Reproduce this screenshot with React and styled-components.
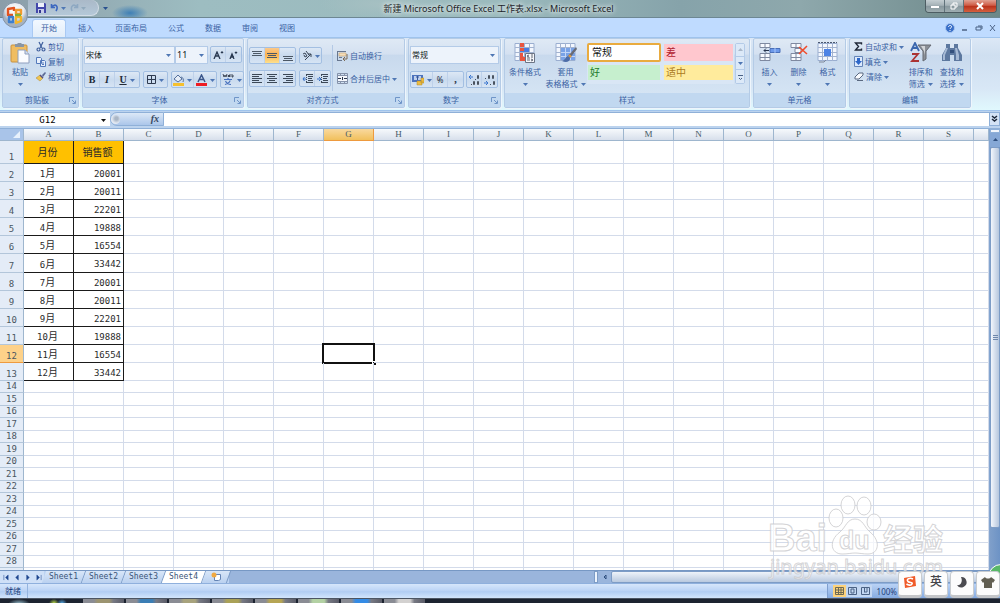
import * as React from 'react';
import styled, { createGlobalStyle } from 'styled-components';

const UI_FONT = '"Noto Sans", "Noto Sans CJK SC", sans-serif';
const CELL_FONT = '"DejaVu Sans Mono", "Noto Sans CJK SC", monospace';

const GlobalStyle = createGlobalStyle`
  *, *::before, *::after {
    box-sizing: border-box;
  }

  body {
    margin: 0;
    overflow: hidden;
    font: 8px/12px ${UI_FONT};
    color: #3a62a3;
  }

  button, select, input {
    margin: 0;
    padding: 0;
    border: 0;
    background: none;
    color: inherit;
    font: inherit;
  }

  svg {
    display: block;
    flex: none;
  }
`;

const Window = styled.div`
  position: relative;
  display: flex;
  flex-direction: column;
  height: 100vh;
  overflow: hidden;
  background: #bfdbff;
`;

/* Title bar */

const TitleBar = styled.header`
  display: grid;
  grid-template-columns: 1fr auto 1fr;
  flex: none;
  height: 18px;
  padding-right: 3px;
  border-bottom: 1px solid #6d8793;
  background:
    radial-gradient(ellipse 18px 8px at 130px 13px, #3f7fb5, transparent),
    radial-gradient(ellipse 60px 14px at 380px 4px, #a6c0c2, transparent),
    linear-gradient(90deg, #8b9da9, #9dbdc1 20%, #9bbabd 50%, #86a3aa 68%, #8ea8ac 80%, #6c8788);
`;

const OfficeButton = styled.button`
  position: absolute;
  top: 2px;
  left: 2px;
  z-index: 2;
  width: 26px;
  height: 26px;
  border-radius: 50%;
`;

const QuickAccess = styled.div`
  display: flex;
  align-items: center;
  gap: 4px;
  height: 16px;
  padding-left: 28px;
`;

const QuickPill = styled.div`
  display: flex;
  align-items: center;
  gap: 4px;
  width: 71px;
  height: 16px;
  padding-left: 8px;
  border: 1px solid #d3dde6;
  border-width: 0 1px 1px 0;
  border-radius: 0 8px 8px 0;
  background: linear-gradient(#aab9c8, #b4c8d8);
`;

const Title = styled.h1`
  margin: 0;
  font-size: 9px;
  font-weight: 400;
  line-height: 18px;
  color: #1c2428;
  text-shadow: 0 0 4px #ffffff, 0 0 6px #dfeaea;
`;

const WindowButtons = styled.div`
  display: flex;
  justify-self: end;
  height: 13px;
  border: 1px solid #4d5d63;
  border-top: 0;
  border-radius: 0 0 4px 4px;
  overflow: hidden;
`;

const WindowButton = styled.button`
  display: flex;
  align-items: center;
  justify-content: center;
  width: ${({ $close }) => ($close ? 32 : 19)}px;
  border-right: ${({ $close }) => ($close ? 0 : '1px solid #60727a')};
  background: ${({ $close }) => ($close
    ? 'linear-gradient(#e0a193, #cf5b45 45%, #b8301a 50%, #d5603f)'
    : 'linear-gradient(#c4ced2, #a5b2b7 45%, #87979d 50%, #9eadb1)')};
`;

/* Ribbon */

const TabRow = styled.nav`
  display: flex;
  flex: none;
  align-items: flex-end;
  height: 19px;
  padding-left: 32px;
`;

const RibbonTab = styled.button`
  height: 18px;
  margin-right: 3px;
  padding: 0 8px 2px;
  border: 1px solid ${({ $active }) => ($active ? '#a9c9f3' : 'transparent')};
  border-bottom: 0;
  border-radius: 3px 3px 0 0;
  background: ${({ $active }) => ($active ? 'linear-gradient(#f2f8ff, #e2edf9)' : 'none')};
  line-height: 15px;
`;

const TabTools = styled.div`
  display: flex;
  align-items: center;
  gap: 6px;
  height: 18px;
  margin-left: auto;
  padding-right: 3px;
`;

const PlainButton = styled.button`
  display: flex;
  align-items: center;
  gap: 2px;
`;

const Ribbon = styled.section`
  display: flex;
  flex: none;
  gap: 3px;
  height: 74px;
  padding: 0 2px 2px;
  border: 1px solid #9fc3ec;
  border-width: 1px 0;
  background: linear-gradient(#dce8f6, #cfdff0 24%, #d8e7f6 70%, #e0f8fd);
`;

const GroupBox = styled.section`
  display: flex;
  flex-direction: column;
  flex: none;
  width: ${({ $width }) => $width}px;
  border: 1px solid #b4cbe6;
  border-radius: 2px;
  background: linear-gradient(#dfe9f5, #d4e1f1 22%, #c8d9ed 24%, #d9e8f6);
  box-shadow: 1px 1px 0 #eef5fc;
`;

const GroupBody = styled.div`
  display: flex;
  flex: 1;
  min-height: 0;
  padding: 0 ${({ $pad = 1 }) => $pad}px;
`;

const GroupLabel = styled.footer`
  display: flex;
  align-items: center;
  flex: none;
  height: 14px;
  padding: 0 2px;
  background: #c1d8f0;

  span {
    flex: 1;
    text-align: center;
  }
`;

const Column = styled.div`
  display: flex;
  flex-direction: column;
  gap: ${({ $gap = 0 }) => $gap}px;
  padding-top: ${({ $top = 0 }) => $top}px;
`;

const Row = styled.div`
  display: flex;
  gap: ${({ $gap = 3 }) => $gap}px;
`;

const LargeButton = styled.button`
  display: flex;
  flex-direction: column;
  align-items: center;
  width: ${({ $width = 29 }) => $width}px;
  padding-top: 3px;
  line-height: 12px;
  white-space: nowrap;
`;

const IconSlot = styled.span`
  display: flex;
  align-items: flex-start;
  height: 24px;
`;

const ButtonLine = styled.span`
  display: flex;
  align-items: center;
  justify-content: center;
  gap: 3px;
  height: 12px;
`;

const SmallButton = styled.button`
  display: flex;
  align-items: center;
  gap: 2px;
  height: 15px;
  white-space: nowrap;
`;

const ToolSet = styled.div`
  display: flex;
  height: 17px;
  border: 1px solid #a3bfe2;
  border-radius: 2px;
  background: linear-gradient(#dde8f5, #c9daee 50%, #d6e4f4);
`;

const Tool = styled.button`
  display: flex;
  align-items: center;
  justify-content: center;
  gap: 3px;
  width: ${({ $width = 15 }) => $width}px;
  border-right: 1px solid #bed1ea;
  background: ${({ $active }) => ($active ? 'linear-gradient(#fbc98b, #fbb14f 45%, #fde08d)' : 'none')};
  color: #222b38;

  &:last-child {
    border-right: 0;
  }
`;

const Letter = styled.span`
  font: ${({ $italic }) => ($italic ? 'italic' : 'normal')} bold 10px/12px "Liberation Serif", serif;
  text-decoration: ${({ $underline }) => ($underline ? 'underline' : 'none')};
`;

const Combo = styled.label`
  display: flex;
  align-items: center;
  width: ${({ $width }) => $width}px;
  height: 18px;
  padding: 0 3px 0 1px;
  border: 1px solid #b4cbe8;
  background: #edf3fb;

  select {
    flex: 1;
    min-width: 0;
    appearance: none;
    outline: 0;
    color: #101820;
    font-size: ${({ $fontSize = 8 }) => $fontSize}px;
  }
`;

const Divider = styled.i`
  width: 1px;
  height: 46px;
  margin: 6px 4px 0 1px;
  background: #b3c9e5;
`;

const Gallery = styled.div`
  display: grid;
  grid-template-columns: 74px 71px;
  grid-template-rows: 19px 17px;
  gap: 2px;
  height: 41px;
  margin-top: 4px;
  background: #d9e6f5;
`;

const StyleSwatch = styled.button`
  margin: ${({ $selected }) => ($selected ? 0 : '1px')};
  padding-left: ${({ $selected }) => ($selected ? 3 : 2)}px;
  border: ${({ $selected }) => ($selected ? '2px solid #e9ab3f' : 0)};
  border-radius: ${({ $selected }) => ($selected ? 2 : 0)}px;
  background: ${({ $fill }) => $fill};
  color: ${({ $ink }) => $ink};
  font-size: 10px;
  line-height: 13px;
  text-align: left;
`;

const GalleryScroll = styled.div`
  display: grid;
  grid-template-rows: repeat(3, 1fr);
  width: 10px;
  height: 41px;
  margin: 4px 0 0 1px;
  border: 1px solid #b4cbe8;
  border-radius: 2px;

  button {
    display: flex;
    align-items: center;
    justify-content: center;
    border-bottom: 1px solid #b4cbe8;
    background: #dce9f8;
  }

  button:last-child {
    border-bottom: 0;
  }
`;

/* Formula bar */

const FormulaBar = styled.div`
  display: flex;
  flex: none;
  height: 18px;
  padding: 1px 0 2px;
  border-bottom: 1px solid #8fb0d8;
  background: #bcd3ee;
`;

const NameBox = styled.label`
  display: flex;
  align-items: center;
  width: 110px;
  padding-right: 4px;
  border-top: 1px solid #8fb0d8;
  background: #ffffff;
  color: #000000;

  input {
    flex: 1;
    min-width: 0;
    padding-right: 6px;
    outline: 0;
    font: 9px/12px ${CELL_FONT};
    text-align: center;
  }
`;

const FunctionArea = styled.div`
  display: flex;
  align-items: center;
  justify-content: space-between;
  width: 54px;
  padding-right: 4px;
  border: 1px solid #8fb0d8;
  border-radius: 8px 0 0 8px;
  background: linear-gradient(#dce8f7, #abc6ea);
  color: #36475e;
`;

const Knob = styled.i`
  width: 9px;
  height: 9px;
  border-radius: 50%;
  background: radial-gradient(circle at 60% 40%, #a9b6c6 20%, #e3e9f2 60%);
`;

const FunctionButton = styled.button`
  font: italic bold 10px/12px "Liberation Serif", serif;
`;

const FormulaInput = styled.input`
  flex: 1;
  min-width: 0;
  border-top: 1px solid #8fb0d8;
  background: #ffffff;
  outline: 0;
`;

const ExpandButton = styled.button`
  display: flex;
  align-items: center;
  justify-content: center;
  width: 11px;
  border: 1px solid #8fb0d8;
  background: #d4e3f5;
`;

/* Worksheet */

const Workspace = styled.main`
  display: flex;
  flex: 1;
  min-height: 0;
  background: #ffffff;
`;

const SheetArea = styled.div`
  flex: 1;
  min-width: 0;
  overflow: hidden;
`;

const Sheet = styled.table`
  width: 100%;
  table-layout: fixed;
  border-collapse: separate;
  border-spacing: 0;
  font: 9px/11px ${CELL_FONT};
  color: #2a2a2a;
`;

const RowNumberCol = styled.col`
  width: 24px;
`;

const DataCol = styled.col`
  width: 50px;
`;

const ColumnHead = styled.th`
  height: 12px;
  padding: 0;
  border-right: 1px solid ${({ $active }) => ($active ? '#ee9a3e' : '#9eb6ce')};
  border-bottom: 1px solid ${({ $active }) => ($active ? '#ee9a3e' : '#9eb6ce')};
  background: ${({ $active }) => ($active
    ? 'linear-gradient(#f9d99f, #f1c05c)'
    : 'linear-gradient(#f6f9fc, #d7dfeb)')};
  color: #465a66;
  font-family: "Liberation Serif", serif;
  font-weight: 400;
`;

const Corner = styled.th`
  padding: 0;
  border-right: 1px solid #9eb6ce;
  border-bottom: 1px solid #9eb6ce;
  background: #a9c4e9;

  svg {
    margin-left: auto;
    margin-right: 3px;
  }
`;

const SheetRow = styled.tr`
  height: ${({ $height }) => $height}px;
`;

const RowHead = styled.th`
  padding: 0;
  border-right: 1px solid #9eb6ce;
  border-bottom: 1px solid ${({ $active }) => ($active ? '#ee9a3e' : '#b3c6da')};
  background: ${({ $active }) => ($active ? '#fdd189' : '#e4ecf7')};
  color: #4a5661;
  font-weight: 400;
  vertical-align: bottom;
`;

const Cell = styled.td`
  position: relative;
  padding: ${({ $padTop }) => ($padTop ? 3 : 0)}px 2px 0 0;
  border-right: 1px solid ${({ $filled }) => ($filled ? '#1a1a1a' : '#d3dbea')};
  border-bottom: 1px solid ${({ $filled }) => ($filled ? '#1a1a1a' : '#d3dbea')};
  background: ${({ $heading }) => ($heading ? '#ffc000' : 'none')};
  font-size: ${({ $heading }) => ($heading ? 10 : 9)}px;
  text-align: ${({ $align = 'left' }) => $align};
`;

const Month = styled.span`
  font-size: 10px;
`;

const Selection = styled.span`
  position: absolute;
  inset: -2px;
  border: 2px solid #111111;

  &::after {
    content: '';
    position: absolute;
    right: -3px;
    bottom: -3px;
    width: 4px;
    height: 4px;
    border: 1px solid #ffffff;
    border-width: 1px 0 0 1px;
    background: #111111;
  }
`;

const VerticalScroll = styled.div`
  display: flex;
  flex-direction: column;
  align-items: stretch;
  width: 11px;
  padding-bottom: 42px;
  border-left: 1px solid #84a5d0;
  background: linear-gradient(90deg, #7f9fca, #6d93c5);
`;

const SplitBox = styled.i`
  height: 4px;
  border: 1px solid #8fb0d8;
  background: #f2f7fd;
`;

const ScrollArrow = styled.button`
  display: flex;
  align-items: center;
  justify-content: center;
  height: 14px;
  background: #86a8d6;
`;

const VerticalThumb = styled.div`
  display: flex;
  flex: 1;
  align-items: center;
  justify-content: center;
  border: 1px solid #7d9cc6;
  border-radius: 2px;
  background: linear-gradient(90deg, #f3f6fc, #b6c6dd);
`;

const SheetBar = styled.footer`
  display: flex;
  flex: none;
  height: 13px;
  border-top: 1px solid #7798c4;
  background: #9ab5dc;
`;

const SheetNav = styled.div`
  display: flex;
  align-items: center;
  justify-content: space-around;
  width: 44px;
  background: #cfe0f7;
`;

const SheetTabs = styled.div`
  display: flex;
  background: #bcd3f2;
`;

const SheetTab = styled.button`
  width: ${({ $width = 40 }) => $width}px;
  border-right: 1px solid #7d9cc6;
  background: ${({ $active }) => ($active ? '#ffffff' : 'linear-gradient(#d8e6f8, #bad1f0)')};
  color: #3b5578;
  font: 8px/12px ${CELL_FONT};
  transform: skewX(-20deg);
  white-space: nowrap;

  span {
    display: block;
    transform: skewX(20deg);
  }

  svg {
    margin: 0 auto;
    transform: skewX(20deg);
  }
`;

const HorizontalScroll = styled.div`
  display: flex;
  width: 406px;
  margin-left: auto;
`;

const HorizontalThumb = styled.div`
  flex: 1;
  margin-right: 20px;
  border: 1px solid #7d9cc6;
  border-radius: 2px;
  background: linear-gradient(#eef3fa, #b9c9df);
`;

const Splitter = styled.i`
  width: 4px;
  margin-right: 3px;
  border: 1px solid #7d9cc6;
  background: #edf4fd;
`;

const StatusBar = styled.footer`
  display: flex;
  flex: none;
  height: 15px;
  border-top: 1px solid #8fb0dd;
  background: linear-gradient(#d6e6fb, #bdd5f6 45%, #b1cdf3 55%, #d2e5fc);
  color: #1f427c;
  line-height: 13px;
`;

const StatusText = styled.span`
  padding: 0 6px 0 5px;
  border-right: 1px solid #94b4df;
`;

const ViewArea = styled.div`
  display: flex;
  align-items: center;
  gap: 5px;
  margin-left: auto;
  padding: 0 103px 0 5px;
  border-left: 1px solid #7f9fcf;
  background: linear-gradient(#b9d2f5, #86abe0);
`;

const ViewButtons = styled.div`
  display: flex;
  height: 12px;
  background: #c3d7f2;

  button {
    display: flex;
    align-items: center;
    justify-content: center;
    width: 13px;
  }

  button:first-child {
    background: #fcd27c;
  }
`;

const TaskBar = styled.footer`
  display: flex;
  flex: none;
  gap: 2px;
  height: 5px;
  padding-left: 83px;
  border-top: 1px solid #4c5563;
  background:
    radial-gradient(ellipse 11px 5px at 19px 5px, #9fc6d4, transparent),
    radial-gradient(ellipse 5px 4px at 54px 4px, #b4d64a, transparent),
    radial-gradient(ellipse 5px 4px at 62px 4px, #54a4dd, transparent),
    #1c2330;
`;

const TaskButton = styled.button`
  width: 41px;
  background: linear-gradient(90deg, #8a8c94, #8a8c94 26%, ${({ $tint }) => $tint} 36%, ${({ $tint }) => $tint} 64%, #777983 74%, #5a5c68);
`;

/* Floating layers */

const Watermark = styled.svg`
  position: absolute;
  right: 50px;
  bottom: 20px;
  pointer-events: none;
`;

const GreenBall = styled.i`
  position: absolute;
  right: -14px;
  bottom: 13px;
  width: 26px;
  height: 26px;
  border: 1px solid #ffffff;
  border-radius: 50%;
  background: #59b868;
`;

const InputMethod = styled.div`
  position: absolute;
  right: 0;
  bottom: 5px;
  display: flex;
  gap: 2px;
`;

const InputKey = styled.button`
  display: flex;
  align-items: center;
  justify-content: center;
  width: 24px;
  height: 27px;
  padding-bottom: 3px;
  border: 1px solid #c8ccd0;
  border-bottom: 3px solid #c3c5c8;
  border-radius: 4px;
  background: #fcfcfc;
  color: #44444a;
  font-size: 12px;
  font-weight: 500;
`;

const Arrow = ({ up = false, color = '#4f77b4' }) => (
  <svg width="5" height="4" viewBox="0 0 5 4" aria-hidden="true">
    <path d={up ? 'M0 3h5L2.500 0z' : 'M0 1h5L2.500 4z'} fill={color} />
  </svg>
);

const Launcher = () => (
  <svg width="7" height="7" viewBox="0 0 7 7" fill="none" stroke="#6f95c8">
    <path d="M.5 5V.5H5M3 3l3 3M6.500 3.500v3h-3" />
  </svg>
);

// eslint-disable-next-line react/prop-types
const Group = ({ title, width, launcher, children, pad }) => (
  <GroupBox $width={width}>
    <GroupBody $pad={pad}>{children}</GroupBody>
    <GroupLabel>
      <span>{title}</span>
      {launcher && <PlainButton aria-label={`${title}设置`}><Launcher /></PlainButton>}
    </GroupLabel>
  </GroupBox>
);

// eslint-disable-next-line react/prop-types
const BigTool = ({ icon, first, second, width }) => (
  <LargeButton $width={width}>
    <IconSlot>{icon}</IconSlot>
    <ButtonLine>{first}</ButtonLine>
    <ButtonLine>{second}<Arrow /></ButtonLine>
  </LargeButton>
);

const OfficeLogo = () => (
  <svg width="26" height="26" viewBox="0 0 26 26">
    <defs>
      <radialGradient id="orb" cx=".5" cy=".3">
        <stop offset="0" stopColor="#ffffff" />
        <stop offset=".7" stopColor="#e5e9ee" />
        <stop offset="1" stopColor="#a4b1c1" />
      </radialGradient>
    </defs>
    <circle cx="13" cy="13" r="12.500" fill="url(#orb)" stroke="#8292a5" />
    <g fill="none" strokeWidth="2.400" strokeLinejoin="round">
      <path d="M11 13H6V7l6-1v3" stroke="#e2531f" />
      <path d="M14 8h5v4h-5z" stroke="#f29a2e" />
      <path d="M7 15h4v5H7z" stroke="#3d7fd0" />
      <path d="M14 15h5v4l-5 2z" stroke="#f3b62c" />
      <path d="M13 13h6" stroke="#7eb33d" />
    </g>
  </svg>
);

const SaveIcon = () => (
  <svg width="10" height="10" viewBox="0 0 10 10">
    <path d="M0 0h9l1 1v9H0z" fill="#4348ab" />
    <path d="M2 0h6v4H2z" fill="#eef1fb" />
    <path d="M2 6h6v4H2z" fill="#c8cdea" />
    <path d="M3 7h2v3H3z" fill="#33388f" />
  </svg>
);

const UndoIcon = ({ redo = false }) => (
  <svg width="9" height="9" viewBox="0 0 9 9" fill="none" stroke={redo ? '#8ea8c2' : '#3d68c0'} strokeWidth="1.600">
    <path d={redo ? 'M7.500 1v3.500H4M7 4C4 0 0 3 2 8' : 'M1.500 1v3.500H5M2 4c3-4 7-1 4 4'} />
  </svg>
);

const PasteIcon = () => (
  <svg width="20" height="22" viewBox="0 0 20 22">
    <rect x="1" y="3" width="16" height="17" rx="1" fill="#f0bd62" stroke="#c9923f" />
    <path d="M5 5V2h2l1-1h3l1 1h2v3z" fill="#8996a5" />
    <path d="M8 8h7l4 4v9H8z" fill="#fbfcff" stroke="#8f9fbe" />
    <path d="M15 8v4h4" fill="#d5dfef" stroke="#8f9fbe" />
  </svg>
);

const CutIcon = () => (
  <svg width="10" height="11" viewBox="0 0 10 11" fill="none" stroke="#3f5f9d" strokeWidth="1.200">
    <path d="M3 1l3 6M7 1L4 7" />
    <circle cx="2.500" cy="8.500" r="1.500" />
    <circle cx="7.500" cy="8.500" r="1.500" />
  </svg>
);

const CopyIcon = () => (
  <svg width="10" height="11" viewBox="0 0 10 11" fill="#e7effb" stroke="#5379bb">
    <path d="M.5 1.500h4l1 1v5h-5zM4.500 4.500h4l1 1v5h-5z" />
    <path d="M6 7h2M6 8.500h2" />
  </svg>
);

const BrushIcon = () => (
  <svg width="10" height="10" viewBox="0 0 10 10">
    <path d="M6 3l3-3 1 1-3 4z" fill="#5c6a95" />
    <path d="M4 3l3 3-3 3-4-3z" fill="#efc550" stroke="#b08837" strokeWidth=".5" />
    <path d="M4 3l3 3" stroke="#534e82" strokeWidth="1.500" />
  </svg>
);

const BorderIcon = () => (
  <svg width="9" height="9" viewBox="0 0 9 9" fill="none" stroke="#2f3b50">
    <path d="M.5.5h8v8h-8zM.5 4.500h8M4.500.5v8" />
  </svg>
);

const FillIcon = () => (
  <svg width="11" height="12" viewBox="0 0 11 12">
    <path d="M1 5l4-4 4 4-4 3z" fill="#e6edf7" stroke="#56719c" />
    <path d="M8 3c2 0 3 3 2 5" fill="none" stroke="#56719c" />
    <path d="M0 9h11v3H0z" fill="#f5c02f" />
  </svg>
);

const FontColorIcon = () => (
  <svg width="11" height="12" viewBox="0 0 11 12">
    <path d="M2 8l3.500-7L9 8M3.500 5.500h4" fill="none" stroke="#3b568a" strokeWidth="1.500" />
    <path d="M0 9h11v3H0z" fill="#ee1c24" />
  </svg>
);

const PhoneticIcon = () => (
  <svg width="12" height="13" viewBox="0 0 12 13" fill="none">
    <path d="M1 1l1 3 1-2 1 2 1-3M8 1v3M8 3.500H6v-1h2M10 1v3h1V2" stroke="#333c4c" strokeWidth=".9" />
    <path d="M2 6.500h8M6 5v1.500M3 11.500c3-1 5-2 5-4M3.500 8c1 2 3 3.500 5.500 3.500" stroke="#456fbd" strokeWidth="1.200" />
  </svg>
);

const VAlignIcon = ({ y }) => (
  <svg width="10" height="12" viewBox="0 0 10 12" stroke="#4c5866">
    <path d={`M0 ${y + 0.5}h10M1 ${y + 2.5}h8M0 ${y + 4.5}h10`} />
  </svg>
);

const ALIGN_PATHS = {
  left: 'M0 1.500h10M0 3.500h7M0 5.500h10M0 7.500h7M0 9.500h10',
  center: 'M0 1.500h10M2 3.500h6M0 5.500h10M2 7.500h6M0 9.500h10',
  right: 'M0 1.500h10M3 3.500h7M0 5.500h10M3 7.500h7M0 9.500h10',
};

const AlignIcon = ({ side }) => (
  <svg width="10" height="11" viewBox="0 0 10 11" stroke="#3c4857">
    <path d={ALIGN_PATHS[side]} />
  </svg>
);

const IndentIcon = ({ out = false }) => (
  <svg width="11" height="10" viewBox="0 0 11 10" fill="none">
    <path d="M4 .5h7M6 2.500h5M6 4.500h4M6 6.500h5M4 8.500h7" stroke="#3c4857" />
    <path d="M4.500 1v8" stroke="#3c4857" strokeDasharray="1 1" />
    <path d={out ? 'M4 5H1M2.500 3L1 5l1.500 2' : 'M0 5h3M2 3l2 2-2 2'} stroke="#3a73c8" />
  </svg>
);

const OrientationIcon = () => (
  <svg width="10" height="10" viewBox="0 0 10 10" fill="none" stroke="#3b4657">
    <path d="M3 9l6-6M6 3h3v3" />
    <path d="M1 3l2-1 2 3-2 1-1-2M4 0l3 4" />
  </svg>
);

const WrapIcon = () => (
  <svg width="11" height="12" viewBox="0 0 11 12" fill="none">
    <path d="M.5 1v10M0 1.500h9M2 7.500h3M0 10.500h5" stroke="#68778f" />
    <path d="M2 3h7v3H2z" fill="#f5dfbd" stroke="#c79d66" strokeWidth=".6" />
    <path d="M10 4v5H6M8 7L6 9l2 2" stroke="#7d6a55" />
  </svg>
);

const MergeIcon = () => (
  <svg width="11" height="11" viewBox="0 0 11 11" fill="none">
    <path d="M.5.5h10v10H.5zM3.500 0v3M7.500 0v3M3.500 8v3M7.500 8v3M0 2.500h11M0 8.500h11" stroke="#8592aa" />
    <path d="M1 3h9v5H1z" fill="#f5f8fd" />
    <path d="M1 5.500h3M10 5.500H7M5.500 4v3" stroke="#27344b" />
  </svg>
);

const CurrencyIcon = () => (
  <svg width="12" height="12" viewBox="0 0 12 12">
    <path d="M0 1h11v7H0z" fill="#4d73bd" />
    <path d="M2 2h7v4H2z" fill="#bfd0ed" />
    <path d="M4 3h3M5.500 2v4" stroke="#35569b" />
    <path d="M5 7h5v4H5zM9 4h3v5H9z" fill="#edbd42" stroke="#b38a2b" strokeWidth=".5" />
  </svg>
);

// eslint-disable-next-line react/prop-types
const DecimalIcon = ({ more = false }) => (
  <svg width="12" height="12" viewBox="0 0 12 12" fill="none">
    <path d={more ? 'M5 3H1M3 1L1 3l2 2' : 'M0 9h4M2 7l2 2-2 2'} stroke="#3b76cf" />
    <path d={more ? 'M7 5.500h1M9.500 1.500h1v3h-1zM3 10.500h1M5.500 7.500h1v3h-1zM9.500 7.500h1v3h-1z' : 'M1 4.500h1M4.500 1.500h1v3h-1zM8.500 1.500h1v3h-1zM6 10.500h1M9.500 7.500h1v3h-1z'} stroke="#49525f" />
  </svg>
);

const SheetGrid = ({ children }) => (
  <svg width="22" height="22" viewBox="0 0 22 22" fill="none">
    <path d="M1 1.500h19v17H1z" fill="#f3f7fe" stroke="#9aaed0" />
    <path d="M1 5.500h19M1 10.500h19M1 14.500h19M5.500 1v18M10.500 1v18M15.500 1v18" stroke="#a3b3d0" />
    {children}
  </svg>
);

const ConditionalIcon = () => (
  <SheetGrid>
    <path d="M6 1h4v4H6zM6 11h3v4H6zM6 15h5v4H6z" fill="#e9553f" />
    <path d="M6 6h9v4H6z" fill="#4a7de0" />
    <path d="M6 6h4v3H6z" fill="#e9553f" />
    <path d="M11.500 11.500h9v9h-9z" fill="#f6f7fb" stroke="#6b7485" />
    <path d="M15 13l-2 1 2 1M13 18h3M17 13h2M17 15h2M17 17l2 1-2 1M13 16h3" stroke="#3c4454" strokeWidth=".8" />
  </SheetGrid>
);

const TableStyleIcon = () => (
  <SheetGrid>
    <path d="M6 6h14v12H6z" fill="#79a2e6" />
    <path d="M6 10.500h14M6 14.500h14M10.500 6v12M15.500 6v12" stroke="#c3d6f7" />
    <path d="M21 5l-8 9 2 2 7-9z" fill="#686b76" />
    <path d="M13 14c-3 0-2 4-6 5 4 2 8 1 8-3z" fill="#4d6da8" />
    <path d="M14 13l2 2" stroke="#d99843" strokeWidth="2" />
  </SheetGrid>
);

const InsertCellsIcon = () => (
  <svg width="22" height="20" viewBox="0 0 22 20">
    <g fill="#f8faff" stroke="#7f89a0">
      <path d="M1 1.500h10v4H1zM6 1v5M1 11.500h10v7H1zM6 11v8M1 15.500h10" />
    </g>
    <path d="M11 6.500h10v4H11z" fill="#6d99ea" stroke="#496fb9" />
    <path d="M16 6v5" stroke="#a9c7fb" />
    <path d="M10 8.500H5M7 6.500l-2 2 2 2" fill="none" stroke="#26334d" />
  </svg>
);

const DeleteCellsIcon = () => (
  <svg width="20" height="20" viewBox="0 0 20 20">
    <g fill="#f8faff" stroke="#7f89a0">
      <path d="M2 1.500h10v4H2zM7 1v5M2 11.500h10v7H2zM7 11v8M2 15.500h10M6 6.500h6v4H6z" />
    </g>
    <path d="M10 5l8 7M18 4l-8 8" stroke="#ef4c2c" strokeWidth="1.600" fill="none" />
  </svg>
);

const FormatCellsIcon = () => (
  <SheetGrid>
    <path d="M7 7h7v7H7z" fill="#4d83e5" />
    <path d="M1 .5h19" stroke="#4c586f" strokeDasharray="2 1" />
    <path d="M2 20h5l2-2" stroke="#7e8798" />
  </SheetGrid>
);

const SortFilterIcon = () => (
  <svg width="22" height="22" viewBox="0 0 22 22" fill="none">
    <path d="M1 9l4-8 4 8M3 6h5" stroke="#3b67ae" strokeWidth="1.800" />
    <path d="M2 12h6l-6 7h7" stroke="#ab3333" strokeWidth="1.800" />
    <path d="M8 3h13l-5 6v8l-3 2V9z" fill="#8c9097" stroke="#666a73" />
    <path d="M11 4h4v9l-1-4z" fill="#d3d5d8" />
  </svg>
);

const BinocularsIcon = () => (
  <svg width="22" height="22" viewBox="0 0 22 22">
    <path d="M5 2h4v4h4V2h4v4l4 7v6h-8v-6H9v6H1v-6l4-7z" fill="#5d789f" />
    <path d="M5 6h2L4 13v5H2v-5zM14 6h2l2 7v5h-3v-5z" fill="#a7bad5" />
    <path d="M9 8h4v3H9z" fill="#35517d" />
  </svg>
);

const SumIcon = () => (
  <svg width="9" height="9" viewBox="0 0 9 9">
    <path d="M7.500 2.500V1h-6L4.500 4.500 1.500 8h6V6.500" fill="none" stroke="#202838" strokeWidth="1.400" />
  </svg>
);

const FillDownIcon = () => (
  <svg width="9" height="11" viewBox="0 0 9 11">
    <path d="M.5.5h8v10h-8z" fill="#dce9fd" stroke="#6685b8" />
    <path d="M3 2h3v3h2L4.500 9 1 5h2z" fill="#2e67c9" />
  </svg>
);

const EraserIcon = () => (
  <svg width="10" height="9" viewBox="0 0 10 9">
    <path d="M5 1h4v2L5 7H1V5z" fill="#f9fbff" stroke="#5a6980" />
    <path d="M3 8.500h6" stroke="#5a6980" />
  </svg>
);

const HelpIcon = () => (
  <svg width="10" height="10" viewBox="0 0 10 10">
    <circle cx="5" cy="5" r="4.500" fill="#396fc8" stroke="#a8c6f0" />
    <path d="M3.500 4c0-2 3.500-2 3 0-.2 1-1.500 1-1.500 2M5 7v1" fill="none" stroke="#ffffff" />
  </svg>
);

const Glyph = ({ d, width = 8, color = '#4b6285', stroke = 1.5 }) => (
  <svg width={width} height="8" viewBox={`0 0 ${width} 8`} fill="none" stroke={color} strokeWidth={stroke}>
    <path d={d} />
  </svg>
);

const NAV_PATHS = ['M1 1v6M6 1L3 4l3 3z', 'M5 1L2 4l3 3z', 'M2 1l3 3-3 3z', 'M6 1v6M1 1l3 3-3 3z'];
const NAV_LABELS = ['第一张', '上一张', '下一张', '最后一张'];

const TABS = ['开始', '插入', '页面布局', '公式', '数据', '审阅', '视图'];
const COLUMNS = 'ABCDEFGHIJKLMNOPQRS'.split('');
const SALES = [20001, 20011, 22201, 19888, 16554, 33442, 20001, 20011, 22201, 19888, 16554, 33442];
const ROWS = Array.from({ length: 29 }, (_, i) => i + 1);
const TASKS = ['#9c9470', '#3b7eb5', '#a8a37d', '#aaa157', '#b6a554', '#b3d1a3', '#348be5', '#d3d1d0'];

const rowHeight = (row) => {
  if (row === 1) return 23;
  if (row === 7) return 19;
  if (row <= 13) return 18;
  return row % 2 === 0 ? 12 : 13;
};

const isActive = (column, row) => column === 'G' && row === 12;

const isFilled = (column, row) => row <= 13 && (column === 'A' || column === 'B');

const cellContent = (column, row) => {
  if (row > 13) return null;
  if (column === 'A') return row === 1 ? '月份' : <>{row - 1}<Month>月</Month></>;
  if (column === 'B') return row === 1 ? '销售额' : SALES[row - 2];
  return null;
};

const cellAlign = (column, row) => (column === 'B' && row > 1 ? 'right' : 'center');

const TitleSection = () => (
  <TitleBar>
    <QuickAccess>
      <QuickPill>
        <PlainButton aria-label="保存"><SaveIcon /></PlainButton>
        <PlainButton aria-label="撤消"><UndoIcon /><Arrow /></PlainButton>
        <PlainButton aria-label="恢复"><UndoIcon redo /><Arrow color="#91a9bd" /></PlainButton>
      </QuickPill>
      <PlainButton aria-label="自定义快速访问工具栏"><Arrow color="#28508f" /></PlainButton>
    </QuickAccess>
    <Title>新建 Microsoft Office Excel 工作表.xlsx - Microsoft Excel</Title>
    <WindowButtons>
      <WindowButton aria-label="最小化"><Glyph d="M0 5h8" color="#ffffff" stroke={2} /></WindowButton>
      <WindowButton aria-label="还原"><Glyph d="M1 3h4v4H1zM3 3V1h4v4H5" color="#ffffff" stroke={1} /></WindowButton>
      <WindowButton aria-label="关闭" $close><Glyph d="M1 1l6 6M7 1L1 7" color="#ffffff" stroke={2} /></WindowButton>
    </WindowButtons>
  </TitleBar>
);

const ClipboardGroup = () => (
  <Group title="剪贴板" width={77} launcher>
    <BigTool width={32} icon={<PasteIcon />} first="粘贴" />
    <Column>
      <SmallButton><CutIcon />剪切</SmallButton>
      <SmallButton><CopyIcon />复制</SmallButton>
      <SmallButton><BrushIcon />格式刷</SmallButton>
    </Column>
  </Group>
);

const FontGroup = () => (
  <Group title="字体" width={162} launcher>
    <Column $gap={7} $top={7}>
      <Row $gap={2}>
        <Row $gap={0}>
          <Combo $width={91}>
            <select aria-label="字体"><option>宋体</option></select>
            <Arrow />
          </Combo>
          <Combo $width={33} $fontSize={9}>
            <select aria-label="字号"><option>11</option></select>
            <Arrow />
          </Combo>
        </Row>
        <ToolSet>
          <Tool aria-label="增大字号"><Glyph d="M1 8l3-7 3 7M2 5h4M8 2l1-1 1 1" width={11} color="#27374f" stroke={1.3} /></Tool>
          <Tool aria-label="减小字号"><Glyph d="M2 8l2-5 2 5M3 6h3M7 1l1 1 1-1" width={11} color="#27374f" stroke={1.3} /></Tool>
        </ToolSet>
      </Row>
      <Row>
        <ToolSet>
          <Tool><Letter>B</Letter></Tool>
          <Tool><Letter $italic>I</Letter></Tool>
          <Tool $width={24}><Letter $underline>U</Letter><Arrow /></Tool>
        </ToolSet>
        <ToolSet>
          <Tool $width={23} aria-label="边框"><BorderIcon /><Arrow /></Tool>
        </ToolSet>
        <ToolSet>
          <Tool $width={22} aria-label="填充颜色"><FillIcon /><Arrow /></Tool>
          <Tool $width={22} aria-label="字体颜色"><FontColorIcon /><Arrow /></Tool>
        </ToolSet>
        <ToolSet>
          <Tool $width={22} aria-label="拼音"><PhoneticIcon /><Arrow /></Tool>
        </ToolSet>
      </Row>
    </Column>
  </Group>
);

const AlignGroup = () => (
  <Group title="对齐方式" width={158} launcher>
    <Column $gap={6} $top={8}>
      <Row>
        <ToolSet>
          <Tool aria-label="顶端对齐"><VAlignIcon y={1} /></Tool>
          <Tool aria-label="垂直居中" $active><VAlignIcon y={3} /></Tool>
          <Tool aria-label="底端对齐"><VAlignIcon y={6} /></Tool>
        </ToolSet>
        <ToolSet>
          <Tool $width={21} aria-label="方向"><OrientationIcon /><Arrow /></Tool>
        </ToolSet>
      </Row>
      <Row>
        <ToolSet>
          <Tool aria-label="左对齐"><AlignIcon side="left" /></Tool>
          <Tool aria-label="居中"><AlignIcon side="center" /></Tool>
          <Tool aria-label="右对齐"><AlignIcon side="right" /></Tool>
        </ToolSet>
        <ToolSet>
          <Tool aria-label="减少缩进量"><IndentIcon out /></Tool>
          <Tool aria-label="增加缩进量"><IndentIcon /></Tool>
        </ToolSet>
      </Row>
    </Column>
    <Divider />
    <Column $gap={8} $top={9}>
      <SmallButton><WrapIcon />自动换行</SmallButton>
      <SmallButton><MergeIcon />合并后居中 <Arrow /></SmallButton>
    </Column>
  </Group>
);

const NumberGroup = () => (
  <Group title="数字" width={93} launcher>
    <Column $gap={7} $top={7}>
      <Combo $width={89}>
        <select aria-label="数字格式"><option>常规</option></select>
        <Arrow />
      </Combo>
      <Row $gap={2}>
        <ToolSet>
          <Tool $width={22} aria-label="会计数字格式"><CurrencyIcon /><Arrow /></Tool>
          <Tool>%</Tool>
          <Tool><Letter>,</Letter></Tool>
        </ToolSet>
        <ToolSet>
          <Tool aria-label="增加小数位数"><DecimalIcon more /></Tool>
          <Tool aria-label="减少小数位数"><DecimalIcon /></Tool>
        </ToolSet>
      </Row>
    </Column>
  </Group>
);

const StylesGroup = () => (
  <Group title="样式" width={246}>
    <BigTool width={38} icon={<ConditionalIcon />} first="条件格式" />
    <BigTool width={43} icon={<TableStyleIcon />} first="套用" second="表格格式" />
    <Gallery>
      <StyleSwatch $selected $fill="#ffffff" $ink="#111111">常规</StyleSwatch>
      <StyleSwatch $fill="#ffc7ce" $ink="#b1202e">差</StyleSwatch>
      <StyleSwatch $fill="#c6efce" $ink="#1d7a2b">好</StyleSwatch>
      <StyleSwatch $fill="#ffeb9c" $ink="#ab7a1c">适中</StyleSwatch>
    </Gallery>
    <GalleryScroll>
      <button type="button" aria-label="上一行"><Arrow up color="#a9b7c9" /></button>
      <button type="button" aria-label="下一行"><Arrow /></button>
      <button type="button" aria-label="其他"><Glyph d="M1 2.500h5M2 5l1.500 1.500L5 5" width={7} stroke={1} /></button>
    </GalleryScroll>
  </Group>
);

const CellsGroup = () => (
  <Group title="单元格" width={93}>
    <BigTool icon={<InsertCellsIcon />} first="插入" />
    <BigTool icon={<DeleteCellsIcon />} first="删除" />
    <BigTool icon={<FormatCellsIcon />} first="格式" />
  </Group>
);

const EditGroup = () => (
  <Group title="编辑" width={122} pad={4}>
    <Column>
      <SmallButton><SumIcon />自动求和 <Arrow /></SmallButton>
      <SmallButton><FillDownIcon />填充 <Arrow /></SmallButton>
      <SmallButton><EraserIcon />清除 <Arrow /></SmallButton>
    </Column>
    <BigTool width={34} icon={<SortFilterIcon />} first="排序和" second="筛选" />
    <BigTool icon={<BinocularsIcon />} first="查找和" second="选择" />
  </Group>
);

const Worksheet = () => (
  <Sheet>
    <colgroup>
      <RowNumberCol />
      {COLUMNS.map((column) => <DataCol key={column} />)}
      <col />
    </colgroup>
    <thead>
      <tr>
        <Corner aria-label="全选">
          <svg width="7" height="7" viewBox="0 0 7 7"><path d="M7 0v7H0z" fill="#e8f1fc" /></svg>
        </Corner>
        {COLUMNS.map((column) => (
          <ColumnHead key={column} $active={column === 'G'}>{column}</ColumnHead>
        ))}
        <ColumnHead />
      </tr>
    </thead>
    <tbody>
      {ROWS.map((row) => (
        <SheetRow key={row} $height={rowHeight(row)}>
          <RowHead $active={row === 12}>{row < 29 ? row : ''}</RowHead>
          {COLUMNS.map((column) => (
            <Cell
              key={column}
              $filled={isFilled(column, row)}
              $heading={row === 1 && isFilled(column, row)}
              $padTop={row > 1 && isFilled(column, row)}
              $align={cellAlign(column, row)}
            >
              {cellContent(column, row)}
              {isActive(column, row) && <Selection />}
            </Cell>
          ))}
          <Cell />
        </SheetRow>
      ))}
    </tbody>
  </Sheet>
);

const PawWatermark = () => (
  <Watermark width="182" height="90" viewBox="0 0 182 90" fill="#ffffff" fillOpacity=".7" stroke="#c9c9cc" strokeOpacity=".8" fontFamily='"Liberation Sans", "Noto Sans CJK SC", sans-serif'>
    <text x="0" y="58" fontSize="38" fontWeight="700">Bai</text>
    <ellipse cx="68" cy="25" rx="7" ry="9" />
    <ellipse cx="80" cy="12" rx="7" ry="9" />
    <ellipse cx="96" cy="13" rx="7" ry="9" />
    <ellipse cx="106" cy="29" rx="7" ry="8" />
    <path d="M87 26c-8 0-9 8-15 13-12 9-9 22 2 22 6 0 9-1 13-1s8 1 13 1c11 0 13-13 2-22-6-5-7-13-15-13z" />
    <text x="71" y="56" fontSize="25" fontWeight="700">du</text>
    <text x="115" y="57" fontSize="30" fontWeight="700">经验</text>
    <text x="2" y="81" fontSize="20" fontWeight="400" fontFamily='"Noto Sans", sans-serif'>jingyan.baidu.com</text>
  </Watermark>
);

const App = () => (
  <Window>
    <GlobalStyle />
    <OfficeButton aria-label="Office 按钮"><OfficeLogo /></OfficeButton>
    <TitleSection />
    <TabRow>
      {TABS.map((tab, i) => <RibbonTab key={tab} $active={i === 0}>{tab}</RibbonTab>)}
      <TabTools>
        <PlainButton aria-label="帮助"><HelpIcon /></PlainButton>
        <PlainButton aria-label="最小化工作簿"><Glyph d="M1 6h5" /></PlainButton>
        <PlainButton aria-label="还原工作簿"><Glyph d="M1 3h5v3H1zM3 2h4v3" stroke={1} /></PlainButton>
        <PlainButton aria-label="关闭工作簿"><Glyph d="M1 1l5 6M6 1L1 7" stroke={1} /></PlainButton>
      </TabTools>
    </TabRow>
    <Ribbon>
      <ClipboardGroup />
      <FontGroup />
      <AlignGroup />
      <NumberGroup />
      <StylesGroup />
      <CellsGroup />
      <EditGroup />
    </Ribbon>
    <FormulaBar>
      <NameBox>
        <input aria-label="名称框" defaultValue="G12" />
        <Arrow color="#111111" />
      </NameBox>
      <FunctionArea>
        <Knob />
        <FunctionButton>fx</FunctionButton>
      </FunctionArea>
      <FormulaInput aria-label="编辑栏" />
      <ExpandButton aria-label="展开编辑栏"><Glyph d="M1 1l2.500 2L6 1M1 4l2.500 2L6 4" width={7} color="#1c2738" /></ExpandButton>
    </FormulaBar>
    <Workspace>
      <SheetArea><Worksheet /></SheetArea>
      <VerticalScroll>
        <SplitBox />
        <ScrollArrow aria-label="向上滚动"><Arrow up color="#2f4f7f" /></ScrollArrow>
        <VerticalThumb><Glyph d="M1 1.500h5M1 3.500h5M1 5.500h5" width={7} stroke={1} color="#6e87ab" /></VerticalThumb>
      </VerticalScroll>
    </Workspace>
    <SheetBar>
      <SheetNav>
        {NAV_PATHS.map((d, i) => (
          <PlainButton key={d} aria-label={NAV_LABELS[i]}>
            <svg width="6" height="7" viewBox="0 0 7 8" fill="#1f4790" stroke="#1f4790" strokeWidth=".6"><path d={d} /></svg>
          </PlainButton>
        ))}
      </SheetNav>
      <SheetTabs>
        <SheetTab><span>Sheet1</span></SheetTab>
        <SheetTab><span>Sheet2</span></SheetTab>
        <SheetTab><span>Sheet3</span></SheetTab>
        <SheetTab $active><span>Sheet4</span></SheetTab>
        <SheetTab $width={25} aria-label="插入工作表">
          <svg width="11" height="10" viewBox="0 0 11 10">
            <path d="M3.500 2.500h6v5l-2 1h-4z" fill="#ffffff" stroke="#6484b5" />
            <circle cx="3" cy="3" r="2.500" fill="#f0a942" />
          </svg>
        </SheetTab>
      </SheetTabs>
      <HorizontalScroll>
        <Splitter />
        <PlainButton aria-label="向左滚动"><Glyph d="M5 2L3 4l2 2z" width={10} color="#2f4f7f" stroke={1} /></PlainButton>
        <HorizontalThumb />
      </HorizontalScroll>
    </SheetBar>
    <StatusBar>
      <StatusText>就绪</StatusText>
      <ViewArea>
        <ViewButtons>
          <button type="button" aria-label="普通"><Glyph d="M.5.5h8v7h-8zM0 3h9M0 5.500h9M3.500 0v8M6 0v8" width={9} stroke={1} color="#6d6a55" /></button>
          <button type="button" aria-label="页面布局"><Glyph d="M.5.5h8v7h-8zM3 2h3v4H3z" width={9} stroke={1} /></button>
          <button type="button" aria-label="分页预览"><Glyph d="M.5.5h8v7h-8zM3.500 0v5M6 0v5M3 5h3" width={9} stroke={1} /></button>
        </ViewButtons>
        <span>100%</span>
      </ViewArea>
    </StatusBar>
    <TaskBar>
      {TASKS.map((tint) => <TaskButton key={tint} $tint={tint} aria-label="任务窗口" />)}
    </TaskBar>
    <PawWatermark />
    <GreenBall />
    <InputMethod>
      <InputKey aria-label="搜狗输入法">
        <svg width="14" height="14" viewBox="0 0 14 14">
          <path d="M1 3l11-2 1 10-11 2z" fill="#f05a28" />
          <path d="M10 4C6 2 3 5 5 6.500S10 7 9 9s-4 1-5.500 0" fill="none" stroke="#ffffff" strokeWidth="1.600" />
        </svg>
      </InputKey>
      <InputKey>英</InputKey>
      <InputKey aria-label="半角">
        <svg width="12" height="12" viewBox="0 0 12 12"><path d="M5 1a5.200 5.200 0 1 1-4 8c4 1 6-4 4-8z" fill="#4b4b50" /></svg>
      </InputKey>
      <InputKey aria-label="皮肤">
        <svg width="14" height="13" viewBox="0 0 14 13"><path d="M4 1c1 2 5 2 6 0l4 3-2 3-1-1v6H3V6L2 7 0 4z" fill="#625f52" /></svg>
      </InputKey>
    </InputMethod>
  </Window>
);

export default App;
